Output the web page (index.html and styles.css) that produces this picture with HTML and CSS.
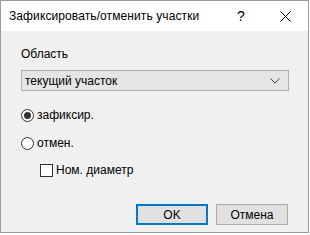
FILE: index.html
```html
<!DOCTYPE html>
<html lang="ru">
<head>
    <meta charset="UTF-8">
    <title>Зафиксировать/отменить участки</title>
    <link rel="stylesheet" href="styles.css">
</head>
<body>
    <div class="window">
        <div class="titlebar">
            <span class="title">Зафиксировать/отменить участки</span>
            <span class="help">?</span>
            <span class="close">
                <svg width="11" height="11" viewBox="0 0 11 11">
                    <path d="M0.5 0.5 L10.5 10.5 M10.5 0.5 L0.5 10.5" stroke="#000" stroke-width="1" fill="none"/>
                </svg>
            </span>
        </div>
        <div class="content">
            <div class="label">Область</div>
            <div class="combo">
                <span>текущий участок</span>
                <svg width="10" height="6" viewBox="0 0 10 6">
                    <path d="M0.5 0.5 L5 5 L9.5 0.5" stroke="#444" stroke-width="1" fill="none"/>
                </svg>
            </div>
            <div class="option first">
                <span class="radio checked"></span>
                <span>зафиксир.</span>
            </div>
            <div class="option">
                <span class="radio"></span>
                <span>отмен.</span>
            </div>
            <div class="option check-row">
                <span class="checkbox"></span>
                <span>Ном. диаметр</span>
            </div>
            <div class="buttons">
                <button class="btn btn-default">OK</button>
                <button class="btn">Отмена</button>
            </div>
        </div>
    </div>
</body>
</html>
```

FILE: styles.css
```css
body {
    margin: 0;
    background: #fff;
    font-family: "Liberation Sans", Arial, sans-serif;
    font-size: 12px;
    color: #000;
}

.window {
    box-sizing: border-box;
    width: 309px;
    height: 233px;
    border: 1px solid #9a9a9a;
    background: #f0f0f0;
    display: flex;
    flex-direction: column;
}

.titlebar {
    height: 30px;
    background: #fff;
    display: flex;
    align-items: center;
    padding-left: 8px;
}

.title {
    flex: 1;
    font-size: 12px;
    letter-spacing: 0.1px;
}

.help {
    width: 12px;
    margin-right: 31px;
    font-size: 14px;
}

.close {
    width: 11px;
    height: 11px;
    margin-right: 17px;
    display: flex;
}

.content {
    flex: 1;
    padding: 0 19px 0 20px;
    display: flex;
    flex-direction: column;
}

.label {
    margin-top: 15px;
    line-height: 16px;
}

.combo {
    box-sizing: border-box;
    height: 21px;
    margin-top: 8px;
    border: 1px solid #adadad;
    background: #e5e5e5;
    display: flex;
    align-items: center;
    justify-content: space-between;
    padding: 0 8px 0 3px;
}

.option {
    display: flex;
    align-items: center;
    gap: 3px;
    height: 16px;
    margin-top: 12px;
}

.option.first {
    margin-top: 16px;
}

.check-row {
    margin-top: 11px;
    padding-left: 19px;
}

.radio {
    box-sizing: border-box;
    width: 13px;
    height: 13px;
    border: 1px solid #333;
    border-radius: 50%;
    background: #fff;
    display: flex;
    align-items: center;
    justify-content: center;
}

.radio.checked::after {
    content: "";
    width: 7px;
    height: 7px;
    border-radius: 50%;
    background: #333;
}

.checkbox {
    box-sizing: border-box;
    width: 13px;
    height: 13px;
    border: 1px solid #333;
    background: #fff;
}

.buttons {
    margin-top: 26px;
    display: flex;
    justify-content: flex-end;
    gap: 8px;
    padding-right: 1px;
}

.btn {
    box-sizing: border-box;
    width: 72px;
    height: 21px;
    padding: 0;
    border: 1px solid #adadad;
    background: #e1e1e1;
    font-family: inherit;
    font-size: 12px;
    color: #000;
}

.btn-default {
    border: 2px solid #0078d7;
}
```
